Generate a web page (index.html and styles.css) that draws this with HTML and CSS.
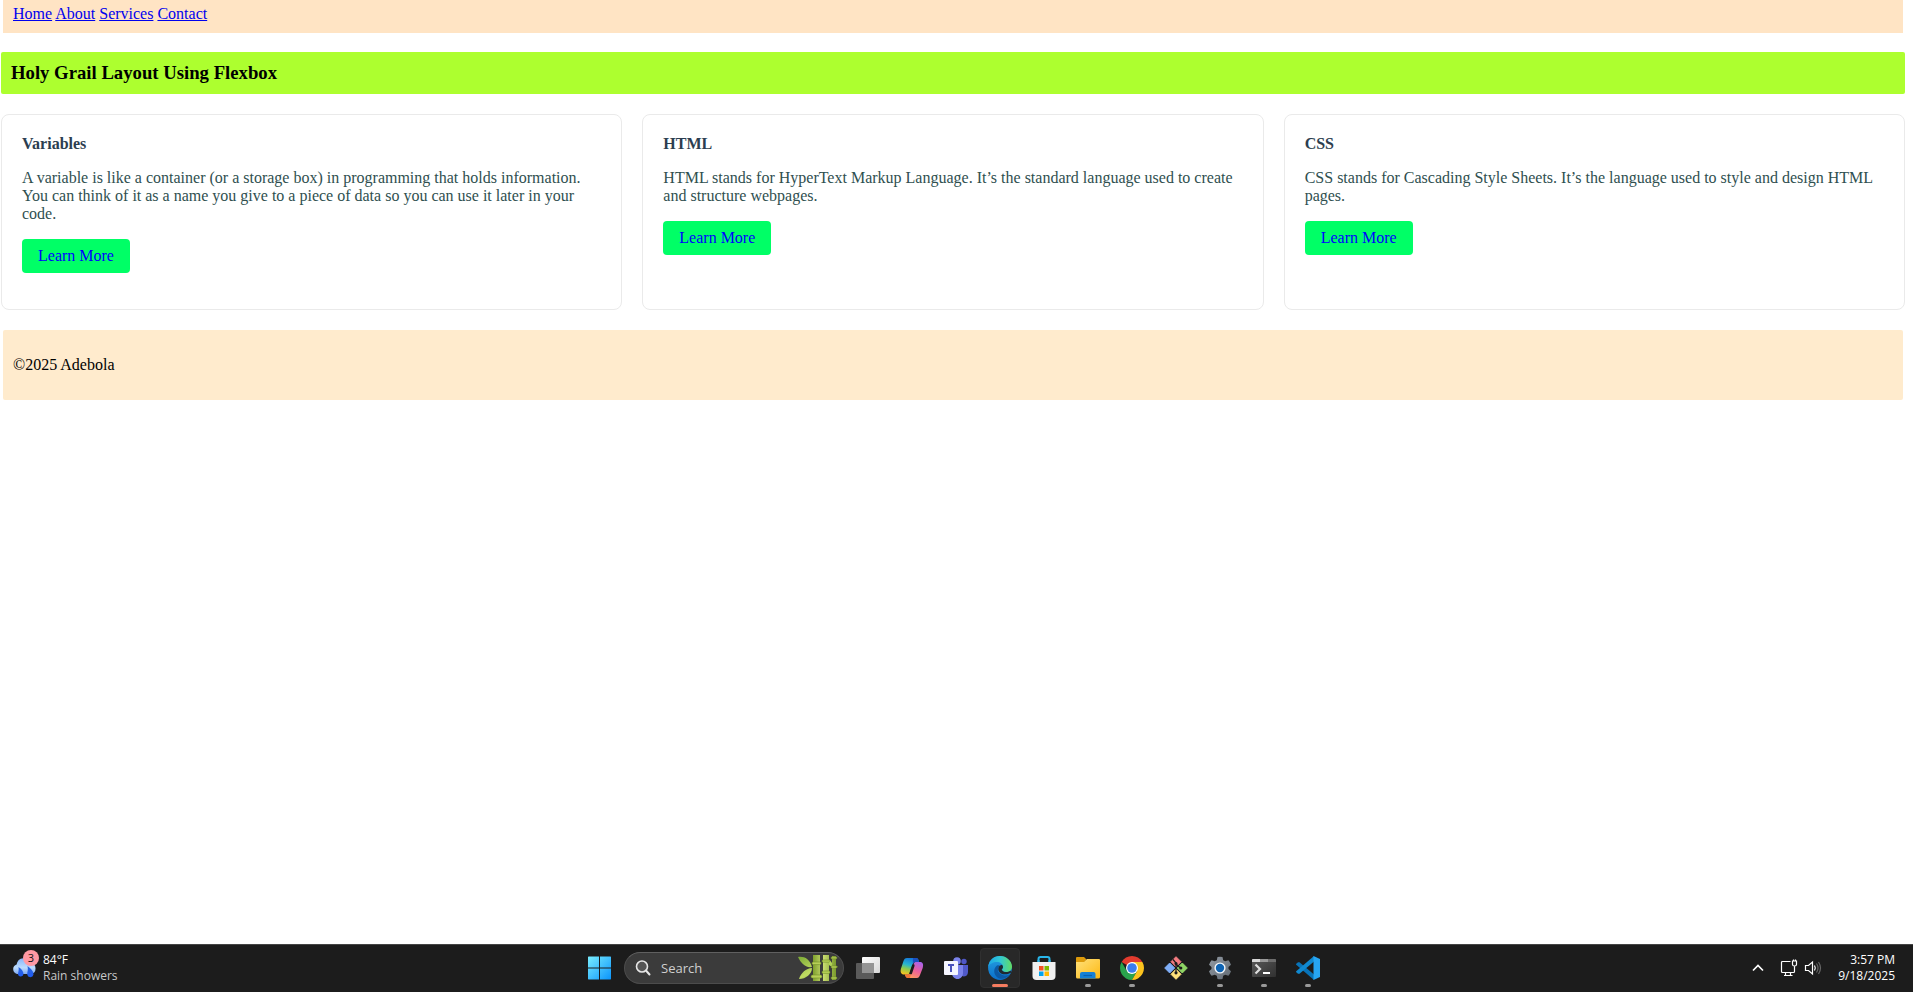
FILE: index.html
```html
<!DOCTYPE html>
<html lang="en">
<head>
<meta charset="utf-8">
<title>Holy Grail Layout</title>
<link rel="stylesheet" href="styles.css">
</head>
<body>
<div class="page">
  <nav class="nav">
    <a href="#home">Home</a>
    <a href="#about">About</a>
    <a href="#services">Services</a>
    <a href="#contact">Contact</a>
  </nav>
  <header class="header"><h3 class="header-title">Holy Grail Layout Using Flexbox</h3></header>
  <main class="cards">
    <article class="card">
      <h4 class="card-title">Variables</h4>
      <p class="card-text">A variable is like a container (or a storage box) in programming that holds information. You can think of it as a name you give to a piece of data so you can use it later in your code.</p>
      <a class="card-link" href="#variables">Learn More</a>
    </article>
    <article class="card">
      <h4 class="card-title">HTML</h4>
      <p class="card-text">HTML stands for HyperText Markup Language. It’s the standard language used to create and structure webpages.</p>
      <a class="card-link" href="#html">Learn More</a>
    </article>
    <article class="card">
      <h4 class="card-title">CSS</h4>
      <p class="card-text">CSS stands for Cascading Style Sheets. It’s the language used to style and design HTML pages.</p>
      <a class="card-link" href="#css">Learn More</a>
    </article>
  </main>
  <footer class="footer"><p class="footer-text">©2025 Adebola</p></footer>
</div>

<div class="taskbar">
  <button class="weather" type="button">
    <span class="weather-icon">
      <svg width="24" height="20" viewBox="0 0 24 20">
        <defs>
          <linearGradient id="cloud" x1="0" y1="0" x2="0" y2="1"><stop offset="0" stop-color="#86b4f8"/><stop offset=".6" stop-color="#bcdcff"/><stop offset="1" stop-color="#7fa9f0"/></linearGradient>
          <linearGradient id="drop" x1="0" y1="0" x2="0" y2="1"><stop offset="0" stop-color="#2a63d8"/><stop offset="1" stop-color="#1f5cf5"/></linearGradient>
        </defs>
        <path d="M5 16a5 5 0 0 1-.4-9.600A7.500 7.500 0 0 1 19 5a5.600 5.600 0 0 1 0 11z" fill="url(#cloud)"/>
        <path d="M6.500 9c3 2 5 4.500 5 7a2.800 2.800 0 0 1-5.500.5c0-2 1.200-4 .5-7.500zM15.500 8c3.500 2.500 6 5 6 8.500a3.200 3.200 0 0 1-6.300 0c0-2.500 1.200-5 .3-8.500z" fill="url(#drop)"/>
      </svg>
      <span class="badge">3</span>
    </span>
    <span class="weather-text"><span class="bright">84°F</span><span>Rain showers</span></span>
  </button>

  <div class="apps">
    <button class="app" type="button" aria-label="Start">
      <svg width="24" height="24" viewBox="0 0 24 24">
        <defs><linearGradient id="win" gradientUnits="userSpaceOnUse" x1="0" y1="0" x2="24" y2="24"><stop offset="0" stop-color="#7cf0ff"/><stop offset="1" stop-color="#0a93fb"/></linearGradient></defs>
        <path d="M1.500.5H12v11H1V1zM13 .5h10.500l.5.5v10.500H13zM1 12.500h11v11H1.500L1 23zM13 12.500h11V23l-.5.5H13z" fill="url(#win)"/>
      </svg>
    </button>
    <label class="search">
      <svg width="16" height="16" viewBox="0 0 16 16" fill="none" stroke="#e6e6e6" stroke-linecap="round"><circle cx="7" cy="6.500" r="5.500" stroke-width="1.600" fill="#555"/><path d="M11 10.500l3.500 4" stroke-width="2"/></svg>
      <input class="search-input" type="text" placeholder="Search" aria-label="Search">
      <svg width="40" height="28" viewBox="0 0 40 28">
        <defs>
          <linearGradient id="cane" x1="0" x2="1"><stop offset="0" stop-color="#7fa02d"/><stop offset=".45" stop-color="#c9dc70"/><stop offset="1" stop-color="#7a9a2c"/></linearGradient>
          <linearGradient id="leaf" x1="0" y1="0" x2="1" y2="1"><stop offset="0" stop-color="#7cab35"/><stop offset=".5" stop-color="#c0dc62"/><stop offset="1" stop-color="#5d8b24"/></linearGradient>
        </defs>
        <path d="M0 3c6-1 12 2 14 10C7 14 3 9 0 3zM1 25c2-6 7-11 13-11 0 6-6 11-13 11zM25 4c4-1 7 2 9 5l6 4c-6 1-11-2-15-9z" fill="url(#leaf)"/>
        <path d="M15 1h7v26h-7zM25 1h6v26h-6zM34 2h4v24h-4z" fill="url(#cane)"/>
        <g fill="#b8d058" stroke="#6f8f27" stroke-width=".6"><rect x="14" y="8" width="9" height="2.600" rx="1.300"/><rect x="13" y="21" width="11" height="3" rx="1.500"/><rect x="24" y="6" width="8" height="2.200" rx="1.100"/><rect x="24" y="17" width="8" height="2.400" rx="1.200"/><rect x="33" y="3" width="6" height="1.800" rx=".9"/><rect x="33" y="12" width="6" height="2" rx="1"/><rect x="33" y="23" width="6" height="2" rx="1"/></g>
      </svg>
    </label>
    <button class="app" type="button" aria-label="Task view">
      <svg width="24" height="24" viewBox="0 0 24 24">
        <defs><linearGradient id="tv" x1="0" y1="0" x2="1" y2="1"><stop offset="0" stop-color="#fff"/><stop offset="1" stop-color="#d6d6d6"/></linearGradient></defs>
        <rect x="6" y="1" width="18" height="16" rx="1" fill="url(#tv)"/><rect x="0" y="7" width="18" height="16" rx="1" fill="#606060" opacity=".92"/><path d="M6 7h12v10H6z" fill="#949494"/>
      </svg>
    </button>
    <button class="app" type="button" aria-label="Copilot">
      <svg width="24" height="24" viewBox="0 0 24 24">
        <defs>
          <linearGradient id="cpa" x1=".5" y1="0" x2=".2" y2="1"><stop offset="0" stop-color="#1678dc"/><stop offset=".4" stop-color="#28b5cf"/><stop offset=".65" stop-color="#8acb50"/><stop offset="1" stop-color="#ffc21c"/></linearGradient>
          <linearGradient id="cpb" x1=".8" y1="0" x2=".3" y2="1"><stop offset="0" stop-color="#a763ed"/><stop offset=".5" stop-color="#ec5f9c"/><stop offset="1" stop-color="#ff9a5c"/></linearGradient>
        </defs>
        <path d="M7 2h9c2 0 2.500 1.500 3 4h-3c-2 0-3 1-3.500 3L10 16c-.6 2-1.500 2.500-3 2.500H4c-3 0-4-2.500-3-6L3.500 5C4.200 3 5 2 7 2z" fill="url(#cpa)"/>
        <path d="M17 22H8c-1.800 0-2.500-1.400-3-3.500h3c2 0 2.700-1 3.300-3L13.700 8c.6-1.700 1.300-2 3-2H20c3 0 3.700 2.500 2.700 6L20 19c-.7 2-1.500 3-3 3z" fill="url(#cpb)"/>
        <path d="M13 2h3c2 0 2.500 1.500 3 4h-3c-1.500 0-2.500.6-3.200 2z" fill="#1b4fc0"/>
        <path d="M5 18.500h3c1.600 0 2.400-.8 3-2L10 22H8c-1.800 0-2.500-1.400-3-3.500z" fill="#f07533"/>
        <path d="M13.300 9.500L10.800 17" stroke="#1c1c1c" stroke-width="2.600" stroke-linecap="round"/>
      </svg>
    </button>
    <button class="app" type="button" aria-label="Teams">
      <svg width="24" height="24" viewBox="0 0 24 24">
        <circle cx="20" cy="5.500" r="2.700" fill="#4f57c6"/><path d="M16 9h8v7c0 3-2 4.500-4.500 4.500L16 19z" fill="#5059c9"/>
        <circle cx="13" cy="5" r="3.800" fill="#7b83eb"/><path d="M8 9h11v8c0 3.500-2.500 6-5.500 6S8 20.500 8 17z" fill="#7b83eb"/>
        <rect x="0" y="5" width="14" height="14" rx="1" fill="#f5f6ff"/><path d="M4 9h6M7 9v7" stroke="#4b53bc" stroke-width="2"/>
      </svg>
    </button>
    <button class="app active" type="button" aria-label="Edge">
      <svg width="24" height="24" viewBox="0 0 24 24">
        <defs>
          <linearGradient id="ea" x1="0" y1=".4" x2="1" y2=".4"><stop offset="0" stop-color="#1ba6e8"/><stop offset=".5" stop-color="#31c8d4"/><stop offset="1" stop-color="#63dc62"/></linearGradient>
          <linearGradient id="eb" x1="0" y1="0" x2="0" y2="1"><stop offset="0" stop-color="#25a0e0"/><stop offset="1" stop-color="#0a6fca"/></linearGradient>
        </defs>
        <circle cx="12" cy="12" r="11.900" fill="url(#eb)"/>
        <path d="M.2 11C1 4 6 .1 12 .1S24 5 24 10.500c0 3.500-2.500 5.500-5.500 5.500-3 0-4.500-1.200-4.500-2 0-.7 1-1 1-3C15 8 12 6 9 6 5 6 1.500 8 .2 11z" fill="url(#ea)"/>
        <path d="M9 9.500c-4 3-3.500 9 .5 12 3 2.200 8 2 12.500-3-3 1.500-6.500 1.300-9-.2-4-2.300-4-6.300-1-8.300-.8-.8-2-.9-3-.5z" fill="#0c59a4"/>
        <path d="M14 14c-1-.8 1-1 1-3 0-1-.5-1.700-1-2.200-2 .2-3.700 2-3.700 4.200 0 4.500 6 7.500 13 3.500l-.8 2C24 17 23 15 22.500 14.800 19 17 14.500 16 14 14z" fill="#202a30"/>
      </svg>
      <span class="running"></span>
    </button>
    <button class="app" type="button" aria-label="Microsoft Store">
      <svg width="24" height="24" viewBox="0 0 24 24">
        <path d="M6.500 7V3q0-2 2-2h7q2 0 2 2v4" fill="none" stroke="#29b6ea" stroke-width="2"/>
        <path d="M.5 6h23v14a4 4 0 0 1-4 4h-15a4 4 0 0 1-4-4z" fill="#f0f0f0"/><path d="M6.500 6V4M17.500 6V4" stroke="#29b6ea" stroke-width="2"/>
        <path d="M7 10h4.500v4.500H7z" fill="#f25022"/><path d="M12.500 10H17v4.500h-4.500z" fill="#7fba00"/><path d="M7 15.500h4.500V20H7z" fill="#00a4ef"/><path d="M12.500 15.500H17V20h-4.500z" fill="#ffb900"/>
      </svg>
    </button>
    <button class="app" type="button" aria-label="File Explorer">
      <svg width="24" height="24" viewBox="0 0 24 24">
        <defs><linearGradient id="fe" x1="0" y1="0" x2="1" y2="1"><stop offset="0" stop-color="#ffe07a"/><stop offset="1" stop-color="#fdb913"/></linearGradient></defs>
        <path d="M0 2q0-1 1-1h7l2.500 2.500L8 7H0z" fill="#dd9a0b"/><path d="M0 6h8l3-3h12q1 0 1 1v17q0 1.500-1.500 1.500h-21Q0 22.500 0 21z" fill="url(#fe)"/>
        <path d="M4 22.500V18q0-2 2-2h11.500q2 0 2 2v4.500z" fill="#1580d5"/><path d="M7.500 19.500h8.500" stroke="#0b61ad" stroke-width="1.200"/>
      </svg>
      <span class="running"></span>
    </button>
    <button class="app" type="button" aria-label="Chrome">
      <svg width="24" height="24" viewBox="0 0 24 24">
        <path d="M12 12L1.610 6A12 12 0 0 1 22.390 6z" fill="#e33b2e"/><path d="M1.610 6A12 12 0 0 0 12 24l5.200-9L12 12 6.800 15z" fill="#2aa34c"/><path d="M22.390 6H12v6l5.200 3L12 24A12 12 0 0 0 22.390 6z" fill="#fcc31e"/>
        <circle cx="12" cy="12" r="6" fill="#fff"/><circle cx="12" cy="12" r="4.800" fill="#3b7ded"/>
      </svg>
      <span class="running"></span>
    </button>
    <button class="app" type="button" aria-label="Git Bash">
      <svg width="24" height="24" viewBox="0 0 24 24">
        <g stroke-width="1" stroke-linejoin="round">
          <path d="M12 .7l5 5-5 5-5-5z" fill="#f47c80" stroke="#f47c80"/><path d="M18.300 7l5 5-5 5-5-5z" fill="#8fd465" stroke="#8fd465"/><path d="M5.700 7l5 5-5 5-5-5z" fill="#7faef7" stroke="#7faef7"/><path d="M12 13.300l5 5-5 5-5-5z" fill="#ffe27c" stroke="#ffe27c"/>
        </g>
        <path d="M9 3.500l3 3.500v10M12 8l4.500 4" fill="none" stroke="#1b1b1b" stroke-width="1.200"/><g fill="#1b1b1b"><circle cx="12" cy="7.500" r="1.500"/><circle cx="12" cy="16.800" r="1.600"/><circle cx="16.800" cy="12" r="1.600"/></g>
      </svg>
    </button>
    <button class="app" type="button" aria-label="Settings">
      <svg width="24" height="24" viewBox="0 0 24 24">
        <defs><linearGradient id="gear" x1="0" y1="0" x2="1" y2="1"><stop offset="0" stop-color="#929aa3"/><stop offset="1" stop-color="#626a73"/></linearGradient></defs>
        <path d="M9.500 1q2.500-.6 5 0l.7 3.200 2 1.100 3.200-1q1.800 2 2.600 4.500L20.500 11v2l2.500 2.200q-.8 2.500-2.600 4.500l-3.200-1-2 1.100-.7 3.200q-2.500.6-5 0l-.7-3.200-2-1.100-3.200 1Q1.800 17.700 1 15.200L3.500 13v-2L1 8.800q.8-2.500 2.600-4.500l3.200 1 2-1.100z" fill="url(#gear)"/>
        <circle cx="12" cy="12" r="5.600" fill="#f2f6fa"/><circle cx="12" cy="12" r="4.200" fill="#0d63b3"/>
      </svg>
      <span class="running"></span>
    </button>
    <button class="app" type="button" aria-label="Terminal">
      <svg width="24" height="24" viewBox="0 0 24 24">
        <defs><linearGradient id="tm" x1="0" y1="0" x2="1" y2="1"><stop offset="0" stop-color="#5a5a5a"/><stop offset="1" stop-color="#303030"/></linearGradient></defs>
        <rect y="3" width="24" height="18" rx="1" fill="url(#tm)"/><path d="M0 6V4q0-1 1-1h7v3z" fill="#d8d8d8"/><path d="M8 3h8v3H8z" fill="#999"/><path d="M16 3h7q1 0 1 1v2h-8z" fill="#6d6d6d"/>
        <path d="M3.500 8.500L8 13l-4.500 4.500" fill="none" stroke="#dedede" stroke-width="2.200"/><path d="M11 17h7" stroke="#fff" stroke-width="2"/>
      </svg>
      <span class="running"></span>
    </button>
    <button class="app" type="button" aria-label="Visual Studio Code">
      <svg width="24" height="24" viewBox="0 0 24 24">
        <path d="M0 8l2-1.800 1.500.1L18 18.500V24L.2 8.800z" fill="#0873b8"/><path d="M0 16l2 1.800 1.500-.1L18 5.500V0L.2 15.200z" fill="#1089d0"/><path d="M17.500 0L24 3v18l-6.500 3z" fill="#27a5f2"/>
      </svg>
      <span class="running"></span>
    </button>
  </div>

  <div class="tray">
    <button class="tray-button" type="button" aria-label="Show hidden icons"><svg width="12" height="8" viewBox="0 0 12 8"><path d="M1 6.500L6 1.500l5 5" fill="none" stroke="#fff" stroke-width="1.700"/></svg></button>
    <button class="tray-button quick" type="button" aria-label="Network and volume">
      <svg width="18" height="18" viewBox="0 0 18 18" fill="none" stroke="#fff" stroke-width="1.200"><path d="M10.500 2.500h-8q-1 0-1 1v9q0 1 1 1h11q1 0 1-1V8M5.500 13.500v3M10.500 13.500v3M4 16.500h8.500M12.500 2h4v3.500q0 1.500-2 1.500t-2-1.500zM13.500 2V.5M15.500 2V.5M14.500 7v3"/></svg>
      <svg width="18" height="18" viewBox="0 0 18 18" fill="none" stroke="#fff" stroke-width="1.200"><path d="M1.500 6.500h3l4-3.500v12l-4-3.500h-3z"/><path d="M10.500 6.500q1.600 2.500 0 5"/><path d="M12.500 4.500q3 4.500 0 9M14.500 3q4 6 0 12" stroke="#666"/></svg>
    </button>
    <button class="clock" type="button"><span>3:57 PM</span><span>9/18/2025</span></button>
  </div>
</div>
</body>
</html>
```
FILE: styles.css
```css
* { box-sizing: border-box; }

body {
  margin: 0;
  min-height: 100vh;
  display: flex;
  flex-direction: column;
  background: #fff;
  font: 16px/18px "Liberation Serif", "Times New Roman", serif;
  color: #000;
}

.page {
  flex: 1;
  padding: 0 8px 20px 1px;
}

.nav {
  margin: 0 2px;
  padding: 5px 10px 10px;
  background: #ffe4c4;
}
.nav a { color: #00e; }

.header {
  margin: 19px 0 20px;
  padding: 10px;
  border-radius: 2px;
  background: #adff2f;
}
.header-title {
  margin: 0;
  line-height: 22px;
}

.cards {
  display: flex;
  gap: 20px;
}
.card {
  flex: 1;
  padding: 20px 20px 36px;
  border: 1px solid #eaeaea;
  border-radius: 8px;
}
.card-title {
  margin: 0 0 16px;
  color: #2c3e50;
}
.card-text {
  margin: 0 0 16px;
  color: #2f4f4f;
}
.card-link {
  display: inline-block;
  padding: 8px 16px;
  border-radius: 4px;
  background: #00ff66;
  color: #00f;
  text-decoration: none;
}

.footer {
  margin: 20px 2px 0;
  padding: 10px;
  border-radius: 2px;
  background: #ffebcd;
  display: flow-root;
}
.footer-text { margin: 16px 0; }

.taskbar {
  height: 48px;
  padding: 0 18px 1px 12px;
  display: grid;
  grid-template-columns: 1fr auto 1fr;
  align-items: center;
  border-top: 1px solid #444;
  background: #1c1c1c;
  color: #fff;
  font: 12px/16px "Open Sans", "Noto Sans", sans-serif;
}
.taskbar button {
  padding: 0;
  border: 0;
  background: none;
  color: inherit;
  font: inherit;
}
.taskbar svg { display: block; flex: none; }

.taskbar .weather {
  display: flex;
  align-items: center;
  justify-self: start;
  gap: 7px;
  color: #c8c8c8;
  text-align: left;
}
.weather-icon { position: relative; }
.badge {
  position: absolute;
  top: -8px;
  right: -3px;
  width: 16px;
  height: 16px;
  border-radius: 50%;
  background: #ff99a4;
  color: #111;
  font-size: 11px;
  text-align: center;
}
.weather-text, .clock { display: flex; flex-direction: column; }
.bright { color: #fff; }

.apps { display: flex; align-items: center; }
.app {
  position: relative;
  width: 44px;
  height: 44px;
  display: flex;
  align-items: center;
  justify-content: center;
}
.app.active::before {
  content: "";
  position: absolute;
  inset: 2px;
  border: 1px solid #303030;
  border-radius: 4px;
  background: #282828;
}
.app svg { position: relative; }
.running {
  position: absolute;
  bottom: 3px;
  left: 19px;
  width: 6px;
  height: 3px;
  border-radius: 2px;
  background: #999;
}
.active .running {
  left: 14px;
  width: 16px;
  background: #f47c60;
}

.search {
  width: 220px;
  height: 32px;
  margin: 0 2px 0 3px;
  padding: 0 5px 0 10px;
  display: flex;
  align-items: center;
  gap: 10px;
  border: 1px solid #4c4c4c;
  border-top-color: #606060;
  border-radius: 16px;
  background: #3b3b3b;
}
.search-input {
  flex: 1;
  min-width: 0;
  padding: 0;
  border: 0;
  outline: 0;
  background: none;
  color: #fff;
  font: 13px/20px "Open Sans", "Noto Sans", sans-serif;
}
.search-input::placeholder { color: #cfcfcf; opacity: 1; }

.tray {
  display: flex;
  align-items: center;
  justify-content: flex-end;
  gap: 16px;
}
.quick { display: flex; gap: 6px; }
.taskbar .clock { text-align: right; }
```
